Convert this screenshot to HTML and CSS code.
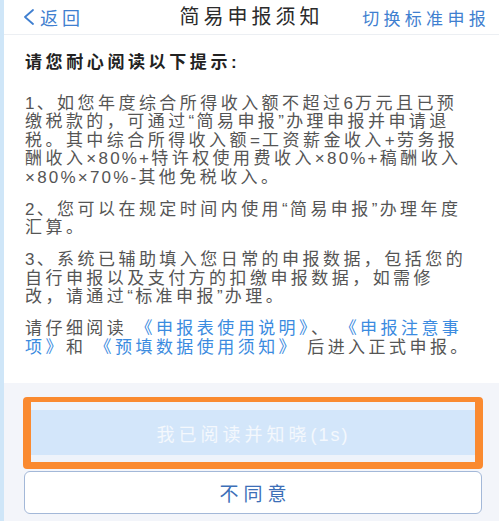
FILE: index.html
```html
<!DOCTYPE html>
<html lang="zh-CN">
<head>
<meta charset="utf-8">
<title>简易申报须知</title>
<link rel="stylesheet" href="styles.css">
</head>
<body>
<div class="screen">
  <header class="topbar">
    <a class="back" href="#">
      <svg class="chev" width="12" height="16" viewBox="0 0 12 16"><polyline points="10,1 2,8 10,15" fill="none" stroke="#3f7fd0" stroke-width="1.8" stroke-linejoin="round" stroke-linecap="round"/></svg>
      <span>返回</span>
    </a>
    <h1 class="title">简易申报须知</h1>
    <a class="switch" href="#">切换标准申报</a>
  </header>

  <main class="notice">
    <h2 class="lead">请您耐心阅读以下提示:</h2>
    <p class="item"><span class="lat">1</span>、如您年度综合所得收入额不超过<span class="lat">6</span>万元且已预<br>缴税款的，可通过<span class="lat">“</span>简易申报<span class="lat">”</span>办理申报并申请退<br>税。其中综合所得收入额<span class="lat">=</span>工资薪金收入<span class="lat">+</span>劳务报<br>酬收入<span class="lat">×80%+</span>特许权使用费收入<span class="lat">×80%+</span>稿酬收入<br><span class="lat">×80%×70%-</span>其他免税收入。</p>
    <p class="item"><span class="lat">2</span>、您可以在规定时间内使用<span class="lat">“</span>简易申报<span class="lat">”</span>办理年度<br>汇算。</p>
    <p class="item"><span class="lat">3</span>、系统已辅助填入您日常的申报数据，包括您的<br>自行申报以及支付方的扣缴申报数据，如需修<br>改，请通过<span class="lat">“</span>标准申报<span class="lat">”</span>办理。</p>
    <p class="item">请仔细阅读 <a class="doc" href="#">《申报表使用说明》</a>、 <a class="doc" href="#">《申报注意事<br>项》</a>和 <a class="doc" href="#">《预填数据使用须知》</a> 后进入正式申报。</p>
  </main>

  <footer class="actions">
    <div class="focus-ring">
      <button class="btn-agree" type="button">我已阅读并知晓<span class="lat">(1s)</span></button>
    </div>
    <button class="btn-refuse" type="button">不同意</button>
  </footer>
</div>
</body>
</html>
```

FILE: styles.css
```css
* { box-sizing: border-box; }

html, body {
  margin: 0;
  padding: 0;
  height: 100%;
}

body {
  font-family: "Liberation Sans", "Noto Sans CJK SC", sans-serif;
  background: #ffffff;
}

.screen {
  height: 521px;
  width: 499px;
  border-left: 4px solid #cfe6f8;
  display: flex;
  flex-direction: column;
  background: #ffffff;
}

/* top navigation */
.topbar {
  height: 35px;
  display: flex;
  align-items: center;
  padding: 0 9px 0 19px;
  border-bottom: 1px solid #eceff3;
  position: relative;
}

.back {
  display: flex;
  align-items: center;
  gap: 5px;
  color: #3f7fd0;
  text-decoration: none;
  font-size: 18px;
  letter-spacing: 4px;
}

.chev { display: block; }

.title {
  position: absolute;
  left: 0;
  right: 0;
  top: 0;
  height: 34px;
  line-height: 34px;
  margin: 0;
  text-align: center;
  font-weight: normal;
  font-size: 20px;
  letter-spacing: 4px;
  color: #2b2b2b;
  pointer-events: none;
}

.switch {
  margin-left: auto;
  color: #3f7fd0;
  text-decoration: none;
  font-size: 17px;
  letter-spacing: 4.3px;
  position: relative;
}

/* notice body */
.notice {
  flex: 1;
  padding: 19px 10px 0 21px;
}

.lead {
  margin: 0 0 22px;
  font-size: 17px;
  font-weight: bold;
  letter-spacing: 3.6px;
  line-height: 18.5px;
  color: #222222;
}

.item {
  margin: 0 0 13.5px;
  font-size: 17px;
  letter-spacing: 3.45px;
  line-height: 18.5px;
  color: #555555;
  white-space: nowrap;
}

/* latin runs sit tighter than the CJK text around them */
.lat {
  letter-spacing: 2.2px;
}

.doc {
  color: #3b8be0;
  text-decoration: none;
}

/* bottom actions */
.actions {
  height: 138px;
  background: #f3f5fa;
  padding: 14px 16px 7px 19px;
  display: flex;
  flex-direction: column;
  gap: 2px;
}

.focus-ring {
  border: solid #fa8a30;
  border-width: 5px 8px 7px 8px;
  border-radius: 4px;
  background: #eef3fa;
  padding: 8px 0 7px;
}

.btn-agree {
  display: block;
  width: 100%;
  height: 45px;
  border: none;
  background: #d3e6fa;
  color: #f4f8fd;
  font-family: inherit;
  font-size: 18px;
  letter-spacing: 4px;
  padding: 0;
}

.btn-agree .lat {
  letter-spacing: 2px;
}

.btn-refuse {
  height: 43px;
  margin: 0 1px;
  border: 1px solid #a3b8d8;
  border-radius: 6px;
  background: #ffffff;
  color: #3d6fb8;
  font-family: inherit;
  font-size: 19px;
  letter-spacing: 5px;
  padding: 0 0 0 5px;
}
```
